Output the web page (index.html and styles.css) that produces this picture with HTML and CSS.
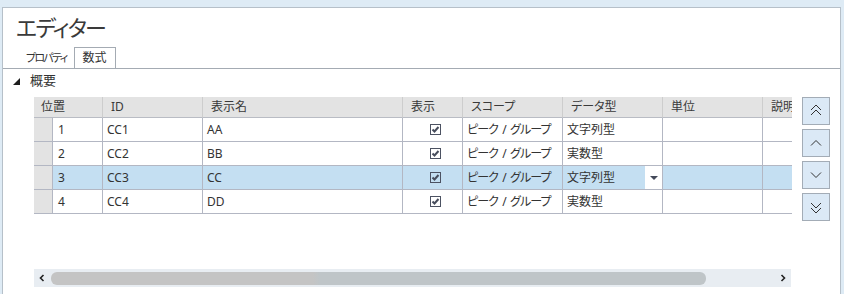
FILE: index.html
```html
<!DOCTYPE html>
<html lang="ja">
<head>
  <meta charset="UTF-8">
  <title>エディター</title>
  <link rel="stylesheet" href="styles.css">
</head>
<body>
  <div class="frame">
    <h1 class="title">エディター</h1>

    <div class="tabs">
      <div class="tab">プロパティ</div>
      <div class="tab active">数式</div>
    </div>

    <div class="section">
      <svg class="caret" width="7" height="7" viewBox="0 0 7 7"><polygon points="7,0 7,7 0,7" fill="#1e1e1e"/></svg>
      <span>概要</span>
    </div>

    <div class="content">
      <div class="gridbox">
        <div class="viewport">
          <div class="grid">
            <div class="hd span2">位置</div>
            <div class="hd">ID</div>
            <div class="hd">表示名</div>
            <div class="hd">表示</div>
            <div class="hd">スコープ</div>
            <div class="hd">データ型</div>
            <div class="hd">単位</div>
            <div class="hd">説明</div>

            <div class="rh"></div>
            <div class="c num">1</div>
            <div class="c">CC1</div>
            <div class="c">AA</div>
            <div class="c chk"><span class="box"><svg width="9" height="9" viewBox="0 0 9 9"><polyline points="1.5,4.5 3.5,6.5 7.5,2" fill="none" stroke="#474d5c" stroke-width="2"/></svg></span></div>
            <div class="c scope">ピーク / グループ</div>
            <div class="c">文字列型</div>
            <div class="c"></div>
            <div class="c"></div>

            <div class="rh"></div>
            <div class="c num">2</div>
            <div class="c">CC2</div>
            <div class="c">BB</div>
            <div class="c chk"><span class="box"><svg width="9" height="9" viewBox="0 0 9 9"><polyline points="1.5,4.5 3.5,6.5 7.5,2" fill="none" stroke="#474d5c" stroke-width="2"/></svg></span></div>
            <div class="c scope">ピーク / グループ</div>
            <div class="c">実数型</div>
            <div class="c"></div>
            <div class="c"></div>

            <div class="rh"></div>
            <div class="c num sel">3</div>
            <div class="c sel">CC3</div>
            <div class="c sel">CC</div>
            <div class="c chk sel"><span class="box"><svg width="9" height="9" viewBox="0 0 9 9"><polyline points="1.5,4.5 3.5,6.5 7.5,2" fill="none" stroke="#474d5c" stroke-width="2"/></svg></span></div>
            <div class="c scope sel">ピーク / グループ</div>
            <div class="c sel combo"><span class="val">文字列型</span><span class="drop"><svg width="8" height="4" viewBox="0 0 8 4"><polygon points="0,0 8,0 4,4" fill="#434a5a"/></svg></span></div>
            <div class="c sel"></div>
            <div class="c sel"></div>

            <div class="rh"></div>
            <div class="c num">4</div>
            <div class="c">CC4</div>
            <div class="c">DD</div>
            <div class="c chk"><span class="box"><svg width="9" height="9" viewBox="0 0 9 9"><polyline points="1.5,4.5 3.5,6.5 7.5,2" fill="none" stroke="#474d5c" stroke-width="2"/></svg></span></div>
            <div class="c scope">ピーク / グループ</div>
            <div class="c">実数型</div>
            <div class="c"></div>
            <div class="c"></div>
          </div>
        </div>

        <div class="hscroll">
          <svg class="arrow" width="6" height="8" viewBox="0 0 6 8"><polyline points="4.5,1 1.5,4 4.5,7" fill="none" stroke="#222" stroke-width="1.6"/></svg>
          <div class="track"><div class="thumb"></div></div>
          <svg class="arrow" width="6" height="8" viewBox="0 0 6 8"><polyline points="1.5,1 4.5,4 1.5,7" fill="none" stroke="#222" stroke-width="1.6"/></svg>
        </div>
      </div>

      <div class="buttons">
        <button class="btn"><svg width="26" height="26" viewBox="0 0 26 26"><polyline points="8,12 13,7 18,12" fill="none" stroke="#333" stroke-width="1"/><polyline points="8,17 13,12 18,17" fill="none" stroke="#333" stroke-width="1"/></svg></button>
        <button class="btn"><svg width="26" height="26" viewBox="0 0 26 26"><polyline points="8,15.5 13,10.5 18,15.5" fill="none" stroke="#333" stroke-width="1"/></svg></button>
        <button class="btn"><svg width="26" height="26" viewBox="0 0 26 26"><polyline points="8,10.5 13,15.5 18,10.5" fill="none" stroke="#333" stroke-width="1"/></svg></button>
        <button class="btn"><svg width="26" height="26" viewBox="0 0 26 26"><polyline points="8,9 13,14 18,9" fill="none" stroke="#333" stroke-width="1"/><polyline points="8,14 13,19 18,14" fill="none" stroke="#333" stroke-width="1"/></svg></button>
      </div>
    </div>
  </div>
</body>
</html>
```

FILE: styles.css
```css
html, body { margin: 0; padding: 0; }
body { background: #deebf5; overflow: hidden; height: 294px; font-family: "Noto Sans", "Noto Sans CJK JP", sans-serif; color: #333; font-feature-settings: "palt"; }

.frame { margin: 7px 0 0 2px; width: 837px; height: 300px; background: #fff; border: 1px solid #b6c0c9; border-bottom: none; }

.title { margin: 4px 0 0 13px; font-size: 22px; font-weight: normal; line-height: 30px; color: #3a3a3a; letter-spacing: -1.8px; }

.tabs { display: flex; padding: 5px 0 0 16px; border-bottom: 1px solid #a4abb3; }
.tab { height: 20px; line-height: 20px; font-size: 11px; padding: 0 6px; border: 1px solid transparent; border-bottom: none; letter-spacing: -1.7px; }
.tab.active { padding: 0 8px; border-color: #a4abb3; font-size: 12px; letter-spacing: 0; }

.section { display: flex; align-items: center; height: 20px; padding-left: 10px; font-size: 13px; }
.caret { margin-right: 10px; margin-top: 4px; }

.content { display: flex; margin: 8px 0 0 31px; }
.gridbox { width: 758px; }
.viewport { width: 758px; overflow: hidden; }

.grid { display: grid; grid-template-columns: 19px 50px 100px 200px 60px 100px 100px 100px 100px; grid-template-rows: 21px repeat(4, 24px); width: 829px; font-size: 12px; }
.grid > div { box-sizing: border-box; white-space: nowrap; overflow: hidden; }

.hd { background: #e3e3e3; border-right: 1px solid #cdcdcd; border-bottom: 1px solid #b9bcc4; line-height: 20px; padding-left: 8px; color: #3a3a3a; }
.hd.span2 { grid-column: span 2; padding-left: 7px; }

.rh { background: #e3e3e3; border-right: 1px solid #b3b7c3; border-bottom: 1px solid #b3b7c3; }
.c { background: #fff; border-right: 1px solid #b3b7c3; border-bottom: 1px solid #b3b7c3; line-height: 23px; padding-left: 4px; }
.c.num { padding-left: 5px; }
.c.scope { letter-spacing: -0.9px; word-spacing: 2px; }
.c.sel { background: #c4dff2; }

.chk { display: flex; align-items: center; justify-content: center; }
.box { display: flex; align-items: center; justify-content: center; width: 11px; height: 11px; box-sizing: border-box; border: 1px solid #4c5262; background: #fff; margin-left: 1px; }
.chk.sel .box { background: #c4dff2; }

.combo { display: flex; padding-right: 0 !important; }
.combo .val { flex: 1; }
.combo .drop { width: 17px; background: #fff; display: flex; align-items: center; justify-content: center; }

.hscroll { display: flex; align-items: center; margin-top: 55px; height: 18px; background: #e8edf2; width: 757px; }
.arrow { flex: none; margin: 0 5px; }
.track { flex: 1; height: 13px; margin: 0 0 0 1px; }
.thumb { width: 655px; height: 13px; border-radius: 6px; background: linear-gradient(to right, #c4c4c4 0%, #c4c4c4 40%, #bfc5c8 41%, #bfc5c8 100%); }

.buttons { display: flex; flex-direction: column; gap: 4px; margin-left: 10px; }
.btn { width: 28px; height: 28px; padding: 0; margin: 0; border: 1px solid #a3acb6; background: #dbe9f6; display: flex; align-items: center; justify-content: center; }
```
